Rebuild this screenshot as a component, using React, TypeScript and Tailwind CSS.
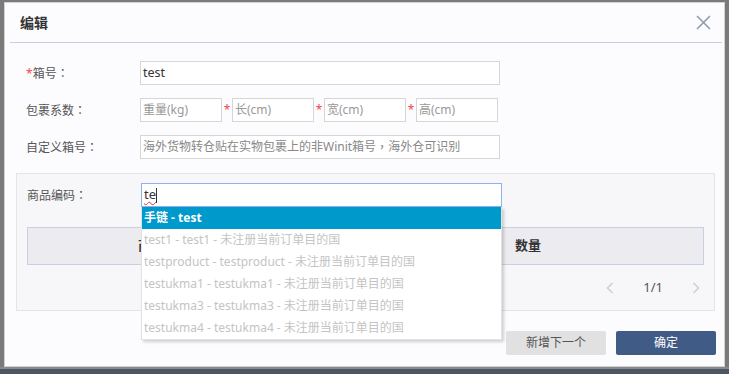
import React from "react";

const FONT = "font-['Noto_Sans','Noto_Sans_CJK_SC',sans-serif]";

const suggestions = [
  "test1 - test1 - 未注册当前订单目的国",
  "testproduct - testproduct - 未注册当前订单目的国",
  "testukma1 - testukma1 - 未注册当前订单目的国",
  "testukma3 - testukma3 - 未注册当前订单目的国",
  "testukma4 - testukma4 - 未注册当前订单目的国",
];

// full-width punctuation centred in its box, as in the reference
function Punct({ children }: { children: string }) {
  return <span className="font-['Noto_Sans_CJK_TC',sans-serif]">{children}</span>;
}

function Label({ text, required }: { text: string; required?: boolean }) {
  return (
    <div className="w-[114px] shrink-0 text-[12px] text-[#555] leading-none">
      {required && <span className="text-[#f04a4a]">*</span>}
      {text}
      <Punct>：</Punct>
    </div>
  );
}

function SmallInput({ placeholder, star }: { placeholder: string; star?: boolean }) {
  return (
    <div className="flex items-center">
      {star && <span className="w-[10px] text-center text-[12px] text-[#f04a4a] leading-none">*</span>}
      <div className="w-[82px] h-[24px] border border-[#d6d6d6] bg-white flex items-center px-[2px] text-[12px] text-[#999]">
        {placeholder}
      </div>
    </div>
  );
}

export default function App() {
  return (
    <div className={`${FONT} w-[729px] h-[374px] bg-[#7a7a7a] flex flex-col overflow-hidden`}>
      <div className="pt-[2px] pl-[4px]">
        {/* Modal */}
        <div className="w-[721px] h-[365px] border border-[#d2d2d2] bg-[#fcfcfe] flex flex-col">
          {/* Header */}
          <div className="h-[39px] flex items-center justify-between pl-[15px] pr-[13px]">
            <span className="text-[14px] font-bold text-[#333]">编辑</span>
            <svg width="15" height="15" viewBox="0 0 15 15" fill="none" stroke="#8d9cb2" strokeWidth="1.6">
              <path d="M1 1l13 13M14 1L1 14" />
            </svg>
          </div>
          <div className="ml-[5px] mr-[2px] h-px bg-[#c9cbe8]" />

          {/* Form */}
          <div className="pt-[18px] pl-[21px] flex flex-col gap-[13px]">
            <div className="flex items-center">
              <Label text="箱号" required />
              <div className="w-[360px] h-[24px] border border-[#d6d6d6] bg-white flex items-center px-[2px] text-[12.5px] text-[#333]">
                test
              </div>
            </div>
            <div className="flex items-center">
              <Label text="包裹系数" />
              <SmallInput placeholder="重量(kg)" />
              <SmallInput placeholder="长(cm)" star />
              <SmallInput placeholder="宽(cm)" star />
              <SmallInput placeholder="高(cm)" star />
            </div>
            <div className="flex items-center">
              <Label text="自定义箱号" />
              <div className="w-[360px] h-[24px] border border-[#d6d6d6] bg-white flex items-center px-[2px] text-[12px] text-[#888] whitespace-nowrap">
                海外货物转仓贴在实物包裹上的非Winit箱号<Punct>，</Punct>海外仓可识别
              </div>
            </div>
          </div>

          {/* Goods panel */}
          <div className="mt-[14px] ml-[11px] mr-[9px] h-[138px] border border-[#e4e4e6] bg-[#f7f7f9] flex flex-col">
            <div className="pt-[9px] pl-[10px] flex items-center">
              <div className="w-[114px] shrink-0 text-[12px] text-[#555] leading-none">
                商品编码<Punct>：</Punct>
              </div>
              <div className="relative">
                <div className="w-[361px] h-[24px] border border-[#8db2ee] bg-white flex items-center px-[2px] text-[13px] text-[#333]">
                  <span className="underline decoration-wavy decoration-[#e03030] decoration-1 underline-offset-2">te</span>
                  <span className="w-px h-[15px] bg-[#333]" />
                </div>
                {/* Autocomplete dropdown */}
                <div className="absolute left-0 top-full z-10 w-[361px] bg-white border-x border-b border-[#e2e2e2] shadow-[2px_2px_3px_rgba(0,0,0,0.18)] flex flex-col">
                  <div className="h-[22px] bg-[#0099cc] flex items-center px-[2px] text-[12px] font-bold text-white">
                    手链 - test
                  </div>
                  {suggestions.map((s) => (
                    <div key={s} className="h-[22px] flex items-center px-[2px] text-[12px] text-[#c4c4c4] whitespace-nowrap">
                      {s}
                    </div>
                  ))}
                </div>
              </div>
            </div>

            <div className="mt-[20px] mx-[10px] h-[38px] border border-[#c8d0e2] bg-[#ececf0] flex items-center text-[13px] font-bold text-[#333]">
              <span className="pl-[110px] w-[487px]">商品编码</span>
              <span>数量</span>
            </div>

            <div className="flex-1 flex items-center justify-end pr-[14px] text-[13px] text-[#555]">
              <svg width="8" height="12" viewBox="0 0 8 12" fill="none" stroke="#cfcfcf" strokeWidth="1.6">
                <path d="M6.5 1L1.5 6l5 5" />
              </svg>
              <span className="mx-[29px]">1/1</span>
              <svg width="8" height="12" viewBox="0 0 8 12" fill="none" stroke="#cfcfcf" strokeWidth="1.6">
                <path d="M1.5 1l5 5-5 5" />
              </svg>
            </div>
          </div>

          {/* Footer */}
          <div className="mt-[20px] mr-[8px] flex justify-end gap-[10px]">
            <button className="w-[100px] h-[24px] rounded-[2px] bg-[#e1e1e1] text-[12px] text-[#555]">新增下一个</button>
            <button className="w-[100px] h-[24px] rounded-[2px] bg-[#405b86] text-[12px] text-white">确定</button>
          </div>
        </div>
      </div>
      <div className="h-[2px] bg-[#8a8a8a]" />
      <div className="flex-1 bg-[#4d5662]" />
    </div>
  );
}
